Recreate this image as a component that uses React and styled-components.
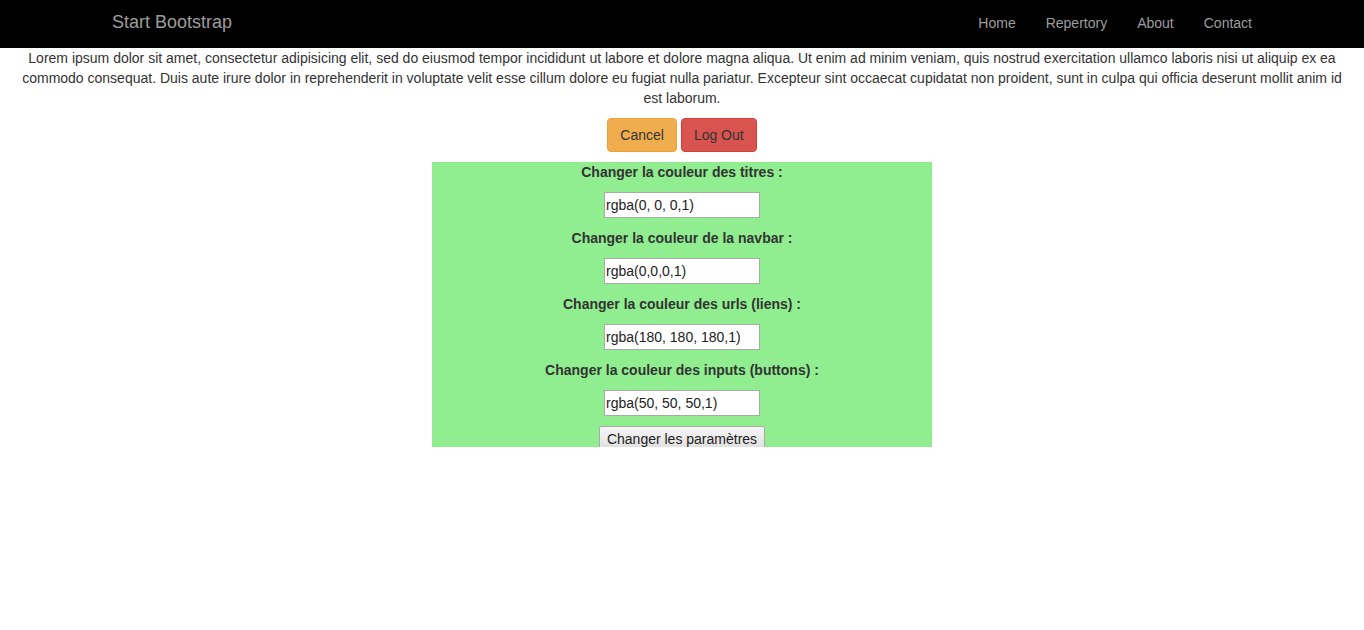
import { Fragment } from 'react';
import styled, { createGlobalStyle } from 'styled-components';

const GlobalStyle = createGlobalStyle`
  html, body {
    margin: 0;
    padding: 0;
    background: #fff;
  }
  body {
    font-family: 'Liberation Sans', Arial, sans-serif;
    font-size: 14px;
    line-height: 20px;
    color: #333;
  }
  * {
    box-sizing: border-box;
  }
`;

const Navbar = styled.nav`
  height: 48px;
  background: #000;
`;

const NavContainer = styled.div`
  width: 1170px;
  margin: 0 auto;
  padding: 0 15px;
  display: flex;
  justify-content: space-between;
  align-items: flex-start;
`;

const Brand = styled.a`
  display: block;
  padding-top: 12px;
  font-size: 18px;
  line-height: 20px;
  color: #9d9d9d;
  text-decoration: none;
`;

const NavList = styled.ul`
  display: flex;
  list-style: none;
  margin: 0 -15px 0 0;
  padding: 0;
`;

const NavLink = styled.a`
  display: block;
  padding: 13px 15px 15px;
  line-height: 20px;
  color: #9d9d9d;
  text-decoration: none;
`;

const Intro = styled.p`
  margin: 0 0 10px;
  padding: 0 15px;
  text-align: center;
`;

const ButtonRow = styled.div`
  display: flex;
  justify-content: center;
  gap: 4px;
  margin-bottom: 10px;
`;

const Btn = styled.button`
  height: 34px;
  padding: 6px 12px;
  font-family: inherit;
  font-size: 14px;
  line-height: 20px;
  color: #333;
  border-radius: 4px;
  border: 1px solid ${p => (p.$variant === 'danger' ? '#d43f3a' : '#eea236')};
  background: ${p => (p.$variant === 'danger' ? '#d9534f' : '#f0ad4e')};
  cursor: pointer;
`;

const SettingsPanel = styled.form`
  width: 500px;
  margin: 0 auto;
  background: #90ee90;
  display: flex;
  flex-direction: column;
  align-items: center;
  gap: 10px;
`;

const FieldLabel = styled.label`
  display: block;
  font-weight: 700;
  line-height: 20px;
  color: #333;
`;

const ColorInput = styled.input`
  width: 156px;
  height: 26px;
  padding: 0 1px;
  font-family: 'Liberation Sans', Arial, sans-serif;
  font-size: 14px;
  color: #222;
  background: #fff;
  border: 1px solid #a9a9a9;
  outline: none;
`;

const SubmitButton = styled.button`
  position: relative;
  height: 25px;
  margin-bottom: -4px;
  padding: 0 7px;
  font-family: 'Liberation Sans', Arial, sans-serif;
  font-size: 14px;
  color: #222;
  border: 1px solid #a9a9a9;
  border-radius: 2px;
  background: linear-gradient(#f6f6f6, #dedede);
`;

const links = ['Home', 'Repertory', 'About', 'Contact'];

const fields = [
  { id: 'titres', label: 'Changer la couleur des titres :', value: 'rgba(0, 0, 0,1)' },
  { id: 'navbar', label: 'Changer la couleur de la navbar :', value: 'rgba(0,0,0,1)' },
  { id: 'urls', label: 'Changer la couleur des urls (liens) :', value: 'rgba(180, 180, 180,1)' },
  { id: 'inputs', label: 'Changer la couleur des inputs (buttons) :', value: 'rgba(50, 50, 50,1)' },
];

export default function App() {
  return (
    <>
      <GlobalStyle />
      <Navbar>
        <NavContainer>
          <Brand href="#">Start Bootstrap</Brand>
          <NavList>
            {links.map(l => (
              <li key={l}>
                <NavLink href="#">{l}</NavLink>
              </li>
            ))}
          </NavList>
        </NavContainer>
      </Navbar>
      <Intro>
        Lorem ipsum dolor sit amet, consectetur adipisicing elit, sed do eiusmod tempor incididunt ut labore et dolore magna aliqua. Ut enim ad minim veniam, quis nostrud exercitation ullamco laboris nisi ut aliquip ex ea commodo consequat. Duis aute irure dolor in reprehenderit in voluptate velit esse cillum dolore eu fugiat nulla pariatur. Excepteur sint occaecat cupidatat non proident, sunt in culpa qui officia deserunt mollit anim id est laborum.
      </Intro>
      <ButtonRow>
        <Btn $variant="warning">Cancel</Btn>
        <Btn $variant="danger">Log Out</Btn>
      </ButtonRow>
      <SettingsPanel onSubmit={e => e.preventDefault()}>
        {fields.map(f => (
          <Fragment key={f.id}>
            <FieldLabel htmlFor={f.id}>{f.label}</FieldLabel>
            <ColorInput id={f.id} type="text" defaultValue={f.value} />
          </Fragment>
        ))}
        <SubmitButton type="submit">Changer les paramètres</SubmitButton>
      </SettingsPanel>
    </>
  );
}
